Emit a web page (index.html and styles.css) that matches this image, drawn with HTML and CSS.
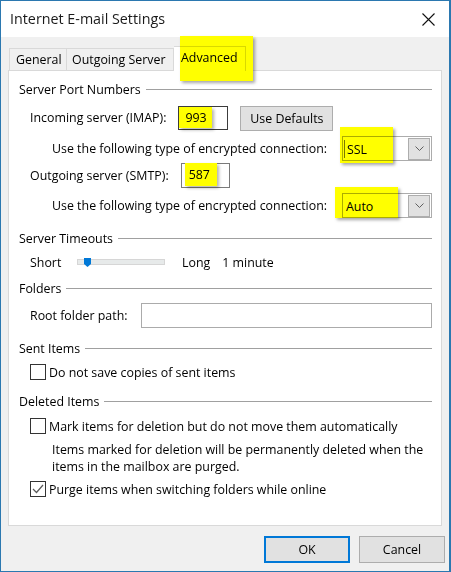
FILE: index.html
```html
<!DOCTYPE html>
<html>
<head>
<meta charset="utf-8">
<title>Internet E-mail Settings</title>
<link rel="stylesheet" href="styles.css">
</head>
<body>
<div class="window">
  <div class="titlebar">
    <span class="title">Internet E-mail Settings</span>
    <svg class="close" width="13" height="13" viewBox="0 0 13 13"><path d="M0.5 0.5L12.5 12.5M12.5 0.5L0.5 12.5" stroke="#111" stroke-width="1.1" fill="none"/></svg>
  </div>
  <div class="client">
    <div class="tabs">
      <div class="tab tab-general">General</div>
      <div class="tab tab-outgoing">Outgoing Server</div>
      <div class="tab tab-advanced">Advanced<span class="marker marker-tab"></span></div>
    </div>
    <div class="panel">
      <div class="group g-ports"><span>Server Port Numbers</span><i class="rule"></i></div>

      <div class="row r-in">
        <span class="label">Incoming server (IMAP):</span>
        <div class="field field-imap"><span class="hl hl-imap">993</span></div>
        <div class="btn btn-defaults">Use Defaults</div>
      </div>

      <div class="row r-enc r-enc1">
        <span class="label">Use the following type of encrypted connection:</span>
        <div class="combo">
          <span class="combo-text combo-caret">SSL</span>
          <span class="combo-btn"><svg width="9" height="5" viewBox="0 0 9 5"><path d="M0.5 0.5L4.5 4.5L8.5 0.5" stroke="#606060" fill="none"/></svg></span>
          <span class="marker marker-ssl"></span>
        </div>
      </div>

      <div class="row r-out">
        <span class="label">Outgoing server (SMTP):</span>
        <div class="field field-smtp"><span class="hl hl-smtp">587</span></div>
      </div>

      <div class="row r-enc r-enc2">
        <span class="label">Use the following type of encrypted connection:</span>
        <div class="combo">
          <span class="combo-text">Auto</span>
          <span class="combo-btn"><svg width="9" height="5" viewBox="0 0 9 5"><path d="M0.5 0.5L4.5 4.5L8.5 0.5" stroke="#606060" fill="none"/></svg></span>
          <span class="marker marker-auto"></span>
        </div>
      </div>

      <div class="group g-timeouts"><span>Server Timeouts</span><i class="rule"></i></div>

      <div class="row r-slider">
        <span class="label label-short">Short</span>
        <div class="track">
          <svg class="thumb" width="7" height="9" viewBox="0 0 7 9"><path d="M0 0H7V6L3.5 9L0 6Z" fill="#0078d7"/></svg>
        </div>
        <span class="label label-long">Long</span>
        <span class="label">1 minute</span>
      </div>

      <div class="group g-folders"><span>Folders</span><i class="rule"></i></div>

      <div class="row r-root">
        <span class="label label-root">Root folder path:</span>
        <div class="field field-root"></div>
      </div>

      <div class="group g-sent"><span>Sent Items</span><i class="rule"></i></div>

      <div class="row r-check r-cb1">
        <span class="checkbox"></span>
        <span class="label">Do not save copies of sent items</span>
      </div>

      <div class="group g-deleted"><span>Deleted Items</span><i class="rule"></i></div>

      <div class="row r-check r-cb2">
        <span class="checkbox"></span>
        <span class="label">Mark items for deletion but do not move them automatically</span>
      </div>

      <p class="note">Items marked for deletion will be permanently deleted when the items in the mailbox are purged.</p>

      <div class="row r-check r-cb3">
        <span class="checkbox checked"><svg width="12" height="10" viewBox="0 0 12 10"><path d="M1 5L4.5 8.5L11 1" stroke="#5a5a5a" stroke-width="1.2" fill="none"/></svg></span>
        <span class="label">Purge items when switching folders while online</span>
      </div>
    </div>
    <div class="buttons">
      <div class="btn btn-dialog btn-ok">OK</div>
      <div class="btn btn-dialog btn-cancel">Cancel</div>
    </div>
  </div>
</div>
</body>
</html>
```

FILE: styles.css
```css
* { box-sizing: border-box; }

html, body {
  margin: 0;
  padding: 0;
  background: #ffffff;
}

body {
  font-family: "Open Sans", "Noto Sans", "DejaVu Sans", sans-serif;
  font-size: 12.4px;
  color: #000;
}

.window {
  width: 451px;
  height: 572px;
  border: 1px solid #2b78b0;
  border-right-width: 2px;
  background: #f0f0f0;
  display: flex;
  flex-direction: column;
}

.titlebar {
  height: 36px;
  background: #ffffff;
  display: flex;
  align-items: center;
  padding-left: 9px;
  padding-right: 14px;
}

.title {
  font-size: 14.3px;
  color: #1a1a1a;
  flex: 1;
  padding-bottom: 1px;
}

.close {
  display: block;
  margin-top: 1px;
}

.client {
  padding: 9px 0 0 7px;
}

/* tabs */
.tabs {
  display: flex;
  align-items: flex-end;
  height: 24px;
  margin-left: 1px;
}

.tab {
  height: 22px;
  border: 1px solid #d9d9d9;
  border-bottom: none;
  border-left: none;
  background: #f0f0f0;
  display: flex;
  align-items: center;
  padding-left: 6px;
  color: #000;
  white-space: nowrap;
}

.tab-general {
  width: 58px;
  border-left: 1px solid #d9d9d9;
  padding-left: 6px;
}

.tab-outgoing {
  width: 107px;
  padding-left: 5px;
}

.tab-advanced {
  width: 72px;
  height: 25px;
  margin-bottom: -1px;
  background: #ffffff;
  position: relative;
  z-index: 1;
  padding-left: 7px;
  padding-bottom: 3px;
}

/* highlighter marks */
.marker {
  position: absolute;
  background: #ffff00;
  mix-blend-mode: multiply;
  box-shadow: 2px 2px 3px rgba(0, 0, 0, 0.35);
  pointer-events: none;
}

.marker-tab {
  left: 6px;
  top: -11px;
  width: 73px;
  height: 45px;
}

.marker-ssl {
  left: -3px;
  top: -10px;
  width: 53px;
  height: 36px;
}

.marker-auto {
  left: -8px;
  top: -7px;
  width: 63px;
  height: 31px;
}

/* panel */
.panel {
  width: 434px;
  height: 456px;
  border: 1px solid #d9d9d9;
  background: #ffffff;
  padding: 10px 9px 0 10px;
}

.group {
  height: 16px;
  display: flex;
  align-items: center;
  gap: 5px;
  white-space: nowrap;
}

.rule {
  flex: 1;
  height: 1px;
  background: #a0a0a0;
  margin-top: 1px;
}

.row {
  display: flex;
  align-items: center;
  padding-left: 11px;
  white-space: nowrap;
}

.label {
  display: block;
}

.r-in {
  margin-top: 9px;
  height: 25px;
  align-items: flex-start;
}

.r-in .label {
  line-height: 24px;
}

.field {
  border: 1px solid #ababab;
  background: #fff;
  height: 24px;
  display: flex;
  align-items: center;
}

.field-imap {
  width: 50px;
  margin-left: 12px;
  border-color: #3c3c3c;
  align-items: stretch;
}

.field-smtp {
  width: 49px;
  margin-left: 12px;
  border-color: #7a7a7a;
  height: 25px;
  align-items: stretch;
}

.hl {
  background: #ffff00;
  box-shadow: 2px 2px 3px rgba(0, 0, 0, 0.3);
  display: flex;
  align-items: center;
}

.hl-imap {
  height: 21px;
  padding: 0 5px 0 6px;
}

.hl-smtp {
  margin-left: 3px;
  margin-top: -1px;
  height: 23px;
  padding: 0 7px 0 4px;
}

.btn {
  background: #e1e1e1;
  border: 1px solid #adadad;
  display: flex;
  align-items: center;
  justify-content: center;
}

.btn-defaults {
  width: 93px;
  height: 25px;
  margin-left: 12px;
}

.r-enc {
  padding-left: 33px;
  height: 25px;
}

.r-enc1 { margin-top: 5px; }
.r-enc2 { margin-top: 5px; }

.combo {
  margin-left: auto;
  width: 90px;
  height: 25px;
  border: 1px solid #acacac;
  background: #fff;
  position: relative;
  display: flex;
  align-items: center;
  padding: 0 1px 0 3px;
}

.combo-text {
  flex: 1;
  padding-top: 1px;
}

.combo-caret {
  border-left: 1px solid #7a7a7a;
  padding-left: 2px;
  margin-left: -2px;
  line-height: 17px;
}

.combo-btn {
  width: 22px;
  height: 22px;
  border: 1px solid #adadad;
  background: #e1e1e1;
  display: flex;
  align-items: center;
  justify-content: center;
}

.combo-btn svg { display: block; }

.r-out {
  margin-top: 2px;
  height: 25px;
}

.r-slider {
  margin-top: 8px;
  height: 16px;
}

.label-short {
  width: 47px;
}

.track {
  width: 88px;
  height: 6px;
  background: #e7eaea;
  border: 1px solid #d6d6d6;
  display: flex;
}

.thumb {
  display: block;
  margin-left: 6px;
  margin-top: -2px;
}

.label-long {
  margin-left: 17px;
  margin-right: 12px;
}

.r-root {
  margin-top: 7px;
  height: 25px;
}

.label-root {
  width: 111px;
}

.field-root {
  flex: 1;
  height: 25px;
}

.g-timeouts { margin-top: 12px; }
.g-folders { margin-top: 10px; }
.g-sent { margin-top: 12px; }
.g-deleted { margin-top: 13px; }

.r-check {
  height: 16px;
  gap: 3px;
}

.checkbox {
  width: 16px;
  height: 16px;
  border: 1px solid #333333;
  background: #fff;
  display: flex;
  align-items: center;
  justify-content: center;
}

.checkbox svg { display: block; }

.r-cb1 { margin-top: 8px; }
.r-cb2 { margin-top: 9px; }
.r-cb3 { margin-top: 6px; }

.note {
  margin: 7px 0 0 0;
  padding-left: 33px;
  padding-right: 0;
  line-height: 17px;
}

/* dialog buttons */
.buttons {
  display: flex;
  justify-content: flex-end;
  gap: 9px;
  margin-top: 10px;
  padding-right: 4px;
}

.btn-dialog {
  width: 86px;
  height: 27px;
}

.btn-ok {
  border: 2px solid #0078d7;
}
```
